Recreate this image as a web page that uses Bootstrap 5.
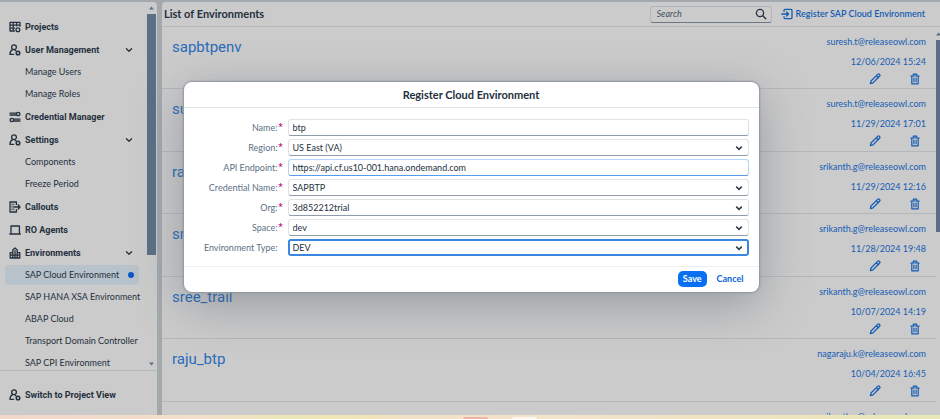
<!DOCTYPE html>
<html lang="en">
<head>
<meta charset="utf-8">
<meta name="viewport" content="width=device-width, initial-scale=1">
<title>List of Environments</title>
<link rel="stylesheet" href="https://cdn.jsdelivr.net/npm/bootstrap@5.3.0/dist/css/bootstrap.min.css">
<style>
:root { --ink:#24303d; --link:#145cb4; --panel:#cbcbcb; --rule:#b5b8bb; --gutter:#a4a9ae; --thumb:#5c6f84; }
html, body { height:100%; }
body { font-family:Lato,"Noto Sans",sans-serif; font-size:9px; line-height:20px; color:var(--ink); background:var(--gutter); overflow:hidden; }
a { text-decoration:none; color:inherit; }
svg { display:block; flex:none; }
.ico { width:12px; height:12px; fill:none; stroke:currentColor; stroke-width:1.3; stroke-linecap:round; stroke-linejoin:round; }
.app-frame { gap:5px; padding-top:2px; position:relative; }
.side { width:157px; background:var(--panel); border-top-right-radius:4px; }
.side-scroll { padding:13px 0 0; }
.side-scroll ul { padding:0 18px 0 5px; }
.side-link { height:22px; padding:0 5px 0 20px; border-radius:4px; white-space:nowrap; }
.side-link.top { height:23px; padding:0 4px; gap:4px; font-family:Roboto,sans-serif; font-weight:700; }
.side-link.active { background:#b7c2ca; height:20px; margin:1px 0; }
.dot { width:6px; height:6px; background:#0a56c4; }
.side-foot { border-top:1px solid var(--rule); padding:5px 9px 0; height:46px; gap:4px; font-family:Roboto,sans-serif; font-weight:700; }
.bar { width:9px; padding:4px 0; right:1px; }
.thumb { background:var(--thumb); }
.tall { height:67%; }
.arrow { width:5px; height:4px; fill:var(--thumb); }
.main-pane { background:var(--panel); border-top-left-radius:4px; }
.main-head { height:25px; border-bottom:1px solid var(--rule); padding:0 15px 0 2px; }
.main-head h1 { font-size:11px; font-weight:700; }
.search { width:122px; height:17px; border:1px solid #b4b7ba; border-bottom-color:#6d7782; border-radius:3px; padding:0 4px 0 6px; }
.search input { background:none; border:0; font-style:italic; outline:0; width:100%; min-width:0; padding:0; color:inherit; }
.search input::placeholder { color:#46505b; opacity:1; }
.register { gap:3px; color:var(--link); margin-left:9px; font-weight:600; }
.env { height:62px; border-bottom:1px solid var(--rule); padding:5px 10px 0; color:var(--link); }
.env:nth-child(even) { height:63px; }
.env h2 { font-family:Roboto,sans-serif; font-size:15px; line-height:30px; font-weight:400; color:#2a6cba; }
.env-tools { gap:28px; padding-right:5px; height:14px; }
.icon-btn { border:0; background:none; padding:0; color:inherit; }
.main-bar { width:4px; padding-top:5px; }
.dock { height:4px; background:linear-gradient(90deg,#f1d8c9 0,#f3dfca 22%,#ebe7b8 30%,#f1e7b4 36%,#f2e1c6 44%,#f3e4cc 60%,#efe3c0 78%,#e7e7b6 100%); padding:2px 0 0 60px; }
.pill { width:25px; height:2px; border-radius:2px 2px 0 0; background:#efb3ac; }
.pill.pale { background:#fbf6ee; }
.veil { inset:0; padding:82px 0 0 2px; z-index:5; }
.dialog { width:575px; max-width:90%; background:#fff; border-radius:8px; box-shadow:0 0 2px 1px #8d949d,0 12px 48px rgba(70,80,95,.4); }
.dialog-head { height:26px; line-height:26px; border-bottom:1px solid #dfe1e3; font-size:11px; font-weight:700; }
.dialog-body { padding:11px 10px 10px 20px; gap:3px; }
.field { gap:10px; }
.field label { width:74px; flex:none; color:#5b6f85; line-height:17px; text-align:right; position:relative; white-space:nowrap; }
.req { position:absolute; left:100%; margin-left:1px; color:#c0117b; font-family:Roboto,sans-serif; font-weight:700; }
.dialog .ctl { height:17px; min-height:0; padding:0 4px; font-size:9px; line-height:15px; color:var(--ink); border:1px solid #dfe3e8; border-bottom-color:#8e9cab; border-radius:3px; box-shadow:none; }
.dialog select.ctl { background-image:url("data:image/svg+xml,%3Csvg xmlns='http://www.w3.org/2000/svg' viewBox='0 0 8 8'%3E%3Cpath d='M1.2 2.6 4 5.4 6.8 2.6' fill='none' stroke='%23303d4a' stroke-width='1.5'/%3E%3C/svg%3E"); background-size:8px 8px; background-position:right 5px center; }
.dialog .ctl.hint { border-color:#b5d6fb; border-bottom-color:#569cec; }
.dialog .ctl.focus { border:2px solid #3a87e2; padding:0 3px; line-height:13px; background-position:right 4px center; }
.dialog-foot { border-top:1px solid #eceef0; padding:4px 10px 5px; gap:5px; }
.dialog-foot .btn { font-size:9px; line-height:16px; padding:0 5px; border:0; border-radius:5px; font-weight:700; }
.dialog-foot .btn-primary { background:#0a70f2; }
.dialog-foot .btn-link { color:#0a64d9; text-decoration:none; }
</style>
</head>
<body class="d-flex flex-column">
<svg width="0" height="0" class="position-absolute" aria-hidden="true">
<symbol id="i-user" viewBox="0 0 12 12"><circle cx="5" cy="3.2" r="2.4"/><path d="M3.6 5.6C1.8 6.4 1 8 1 10.4h3.6M6 6.2l1 .6"/><circle cx="9" cy="9" r="1.8" stroke-width="1.5"/></symbol>
<symbol id="i-pen" viewBox="0 0 12 12"><path d="M1.4 10.6 2 8l6.6-6.6a1.2 1.2 0 0 1 1.9 1.9L4 9.9zM7.4 2.8l1.9 1.9"/></symbol>
<symbol id="i-bin" viewBox="0 0 12 12"><path d="M1.8 3h8.4M4.3 2.8V1.2h3.4v1.6M2.8 3.2v7.6h6.4V3.2M4.9 5.2v3.6M7.1 5.2v3.6" stroke-width="1.2"/></symbol>
<symbol id="i-down" viewBox="0 0 12 12"><path d="M3.4 4.8 6 7.2l2.6-2.4"/></symbol>
</svg>
<div class="app-frame d-flex flex-grow-1 overflow-hidden">
<aside class="side d-flex flex-column flex-shrink-0">
<div class="side-scroll flex-grow-1 overflow-hidden position-relative">
<ul class="list-unstyled m-0">
<li><a href="#" class="side-link top d-flex align-items-center"><svg class="ico" viewBox="0 0 12 12"><path d="M5.4 10H1V1.4h10v3.8M1 4.2h9.6M1 7.2h4.6M4.2 1.6v8.2M7.6 1.6v3.2"/><circle cx="8.9" cy="8.8" r="1.9"/></svg>Projects</a></li>
<li><a href="#" class="side-link top d-flex align-items-center"><svg class="ico"><use href="#i-user"/></svg><span class="flex-grow-1">User Management</span><svg class="ico"><use href="#i-down"/></svg></a></li>
<li><a href="#" class="side-link d-flex align-items-center">Manage Users</a></li>
<li><a href="#" class="side-link d-flex align-items-center">Manage Roles</a></li>
<li><a href="#" class="side-link top d-flex align-items-center"><svg class="ico" viewBox="0 0 12 12"><circle cx="9.2" cy="3" r="1.7"/><path d="M1 2.2h6.2M1 4h6.2M4.8 8.2H11M4.8 10H11"/><circle cx="2.8" cy="9" r="1.7"/></svg>Credential Manager</a></li>
<li><a href="#" class="side-link top d-flex align-items-center"><svg class="ico"><use href="#i-user"/></svg><span class="flex-grow-1">Settings</span><svg class="ico"><use href="#i-down"/></svg></a></li>
<li><a href="#" class="side-link d-flex align-items-center">Components</a></li>
<li><a href="#" class="side-link d-flex align-items-center">Freeze Period</a></li>
<li><a href="#" class="side-link top d-flex align-items-center"><svg class="ico" viewBox="0 0 12 12"><path d="M7.4 3.4V1H1v10h6.4V8.6M5.6 6h5.4M9.2 4 11 6 9.2 8"/><path d="M3 3v6.4M4.8 3v6.4" stroke-width=".9" stroke-dasharray="1 1.4"/></svg>Callouts</a></li>
<li><a href="#" class="side-link top d-flex align-items-center"><svg class="ico" viewBox="0 0 12 12"><path d="M2 9V2h8.4v7M.8 10h10.6"/></svg>RO Agents</a></li>
<li><a href="#" class="side-link top d-flex align-items-center"><svg class="ico" viewBox="0 0 12 12"><path d="M1.2 11V5.6h2.6V3L6 1l2.2 2v2.6h2.6V11zM3.8 5.6V11M8.2 5.6V11M6 3.6V11M1.4 8.2h9.2"/></svg><span class="flex-grow-1">Environments</span><svg class="ico"><use href="#i-down"/></svg></a></li>
<li><a href="#" class="side-link active d-flex align-items-center justify-content-between">SAP Cloud Environment<span class="dot rounded-circle"></span></a></li>
<li><a href="#" class="side-link d-flex align-items-center">SAP HANA XSA Environment</a></li>
<li><a href="#" class="side-link d-flex align-items-center">ABAP Cloud</a></li>
<li><a href="#" class="side-link d-flex align-items-center">Transport Domain Controller</a></li>
<li><a href="#" class="side-link d-flex align-items-center">SAP CPI Environment</a></li>
</ul>
<div class="bar position-absolute top-0 bottom-0 d-flex flex-column align-items-center gap-1">
<svg class="arrow" viewBox="0 0 5 4"><path d="M0 3.5 2.5.5 5 3.5z"/></svg>
<div class="thumb tall w-100"></div>
<svg class="arrow mt-auto" viewBox="0 0 5 4"><path d="M0 .5 2.5 3.5 5 .5z"/></svg>
</div>
</div>
<a href="#" class="side-foot d-flex align-items-center"><svg class="ico"><use href="#i-user"/></svg>Switch to Project View</a>
</aside>
<main class="main-pane d-flex flex-column flex-grow-1 overflow-hidden">
<header class="main-head d-flex align-items-center flex-shrink-0">
<h1 class="m-0 flex-grow-1">List of Environments</h1>
<div class="search d-flex align-items-center"><input type="search" placeholder="Search" aria-label="Search"><svg class="ico" viewBox="0 0 12 12"><circle cx="5" cy="5" r="3.6"/><path d="m7.8 7.8 3 3"/></svg></div>
<a href="#" class="register d-flex align-items-center"><svg class="ico" viewBox="0 0 12 12"><path d="M3 3.4V2.4a1 1 0 0 1 1-1h6a1 1 0 0 1 1 1v7.2a1 1 0 0 1-1 1H4a1 1 0 0 1-1-1v-1M.8 6h6.6M5.6 4l2 2-2 2"/></svg>Register SAP Cloud Environment</a>
</header>
<div class="d-flex flex-grow-1 overflow-hidden">
<ul class="list-unstyled m-0 flex-grow-1">
<li class="env d-flex justify-content-between"><h2 class="m-0">sapbtpenv</h2><div class="d-flex flex-column align-items-end"><span>suresh.t@releaseowl.com</span><span>12/06/2024 15:24</span><div class="env-tools d-flex align-items-center"><button class="icon-btn" aria-label="Edit"><svg class="ico"><use href="#i-pen"/></svg></button><button class="icon-btn" aria-label="Delete"><svg class="ico"><use href="#i-bin"/></svg></button></div></div></li>
<li class="env d-flex justify-content-between"><h2 class="m-0">su</h2><div class="d-flex flex-column align-items-end"><span>suresh.t@releaseowl.com</span><span>11/29/2024 17:01</span><div class="env-tools d-flex align-items-center"><button class="icon-btn" aria-label="Edit"><svg class="ico"><use href="#i-pen"/></svg></button><button class="icon-btn" aria-label="Delete"><svg class="ico"><use href="#i-bin"/></svg></button></div></div></li>
<li class="env d-flex justify-content-between"><h2 class="m-0">ra</h2><div class="d-flex flex-column align-items-end"><span>srikanth.g@releaseowl.com</span><span>11/29/2024 12:16</span><div class="env-tools d-flex align-items-center"><button class="icon-btn" aria-label="Edit"><svg class="ico"><use href="#i-pen"/></svg></button><button class="icon-btn" aria-label="Delete"><svg class="ico"><use href="#i-bin"/></svg></button></div></div></li>
<li class="env d-flex justify-content-between"><h2 class="m-0">sr</h2><div class="d-flex flex-column align-items-end"><span>srikanth.g@releaseowl.com</span><span>11/28/2024 19:48</span><div class="env-tools d-flex align-items-center"><button class="icon-btn" aria-label="Edit"><svg class="ico"><use href="#i-pen"/></svg></button><button class="icon-btn" aria-label="Delete"><svg class="ico"><use href="#i-bin"/></svg></button></div></div></li>
<li class="env d-flex justify-content-between"><h2 class="m-0">sree_trail</h2><div class="d-flex flex-column align-items-end"><span>srikanth.g@releaseowl.com</span><span>10/07/2024 14:19</span><div class="env-tools d-flex align-items-center"><button class="icon-btn" aria-label="Edit"><svg class="ico"><use href="#i-pen"/></svg></button><button class="icon-btn" aria-label="Delete"><svg class="ico"><use href="#i-bin"/></svg></button></div></div></li>
<li class="env d-flex justify-content-between"><h2 class="m-0">raju_btp</h2><div class="d-flex flex-column align-items-end"><span>nagaraju.k@releaseowl.com</span><span>10/04/2024 16:45</span><div class="env-tools d-flex align-items-center"><button class="icon-btn" aria-label="Edit"><svg class="ico"><use href="#i-pen"/></svg></button><button class="icon-btn" aria-label="Delete"><svg class="ico"><use href="#i-bin"/></svg></button></div></div></li>
<li class="env d-flex justify-content-end"><span>srikanth.g@releaseowl.com</span></li>
</ul>
<div class="main-bar d-flex flex-column align-items-center flex-shrink-0"><svg class="arrow" viewBox="0 0 5 4"><path d="M0 3.5 2.5.5 5 3.5z"/></svg><div class="thumb w-100 h-50 mt-1"></div></div>
</div>
</main>
<div class="veil position-absolute d-flex justify-content-center align-items-start">
<form class="dialog" role="dialog" aria-labelledby="dlg-title">
<h2 id="dlg-title" class="dialog-head m-0 text-center">Register Cloud Environment</h2>
<div class="dialog-body d-flex flex-column">
<div class="field d-flex"><label for="f1">Name:<span class="req">*</span></label><input id="f1" class="form-control ctl" value="btp"></div>
<div class="field d-flex"><label for="f2">Region:<span class="req">*</span></label><select id="f2" class="form-select ctl"><option>US East (VA)</option></select></div>
<div class="field d-flex"><label for="f3">API Endpoint:<span class="req">*</span></label><input id="f3" class="form-control ctl hint" value="https://api.cf.us10-001.hana.ondemand.com"></div>
<div class="field d-flex"><label for="f4">Credential Name:<span class="req">*</span></label><select id="f4" class="form-select ctl"><option>SAPBTP</option></select></div>
<div class="field d-flex"><label for="f5">Org:<span class="req">*</span></label><select id="f5" class="form-select ctl"><option>3d852212trial</option></select></div>
<div class="field d-flex"><label for="f6">Space:<span class="req">*</span></label><select id="f6" class="form-select ctl"><option>dev</option></select></div>
<div class="field d-flex"><label for="f7">Environment Type:</label><select id="f7" class="form-select ctl focus"><option>DEV</option></select></div>
</div>
<div class="dialog-foot d-flex justify-content-end"><button type="button" class="btn btn-primary">Save</button><button type="button" class="btn btn-link">Cancel</button></div>
</form>
</div>
</div>
<footer class="dock d-flex justify-content-center flex-shrink-0 gap-4"><span class="pill"></span><span class="pill pale"></span></footer>
<script src="https://cdn.jsdelivr.net/npm/bootstrap@5.3.0/dist/js/bootstrap.bundle.min.js"></script>
</body>
</html>
